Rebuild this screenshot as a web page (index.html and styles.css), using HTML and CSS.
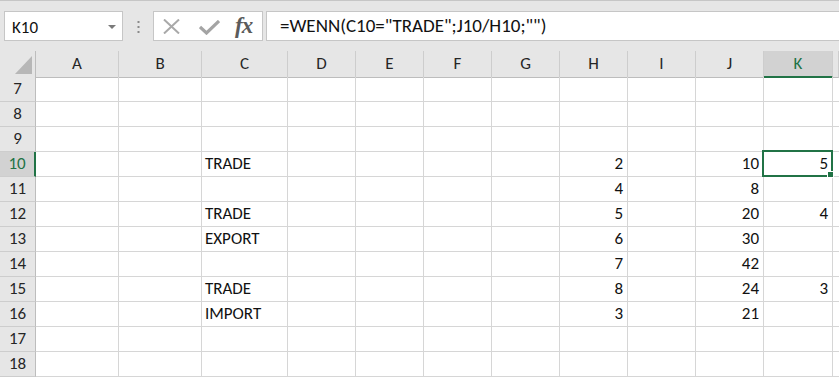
FILE: index.html
```html
<!DOCTYPE html>
<html lang="de">
<head>
    <meta charset="UTF-8">
    <title>Mappe1 - Excel</title>
    <link rel="stylesheet" href="styles.css">
</head>
<body>
    <!-- Formula bar -->
    <div class="toolbar">
        <div class="namebox">
            <span>K10</span>
            <span class="caret"></span>
        </div>
        <div class="grip">
            <svg width="3" height="12" viewBox="0 0 3 12"><rect x="0.5" y="0" width="2" height="2" fill="#8a8a8a"/><rect x="0.5" y="5" width="2" height="2" fill="#8a8a8a"/><rect x="0.5" y="10" width="2" height="2" fill="#8a8a8a"/></svg>
        </div>
        <div class="fxbox">
            <svg class="icon-cancel" width="17" height="15" viewBox="0 0 17 15"><path d="M1 0.5 L16 14.5 M16 0.5 L1 14.5" stroke="#a9a9a9" stroke-width="2" fill="none"/></svg>
            <svg class="icon-enter" width="21" height="15" viewBox="0 0 21 15"><path d="M1 7 L7.5 13 L20 1" stroke="#a4a4a4" stroke-width="3.2" fill="none"/></svg>
            <span class="fx">fx</span>
        </div>
        <div class="formula">=WENN(C10="TRADE";J10/H10;"")</div>
    </div>

    <!-- Sheet -->
    <div class="sheet">
        <div class="row head">
            <div class="hcell corner"><svg width="17" height="18" viewBox="0 0 17 18"><polygon points="17,0 17,18 0,18" fill="#b7b7b7"/></svg></div>
            <div class="hcell">A</div>
            <div class="hcell">B</div>
            <div class="hcell">C</div>
            <div class="hcell">D</div>
            <div class="hcell">E</div>
            <div class="hcell">F</div>
            <div class="hcell">G</div>
            <div class="hcell">H</div>
            <div class="hcell">I</div>
            <div class="hcell">J</div>
            <div class="hcell sel">K</div>
            <div class="hcell"></div>
        </div>

        <div class="row">
            <div class="rhead">7</div>
            <div class="cell"></div><div class="cell"></div><div class="cell"></div><div class="cell"></div><div class="cell"></div><div class="cell"></div><div class="cell"></div><div class="cell"></div><div class="cell"></div><div class="cell"></div><div class="cell"></div><div class="cell"></div>
        </div>
        <div class="row">
            <div class="rhead">8</div>
            <div class="cell"></div><div class="cell"></div><div class="cell"></div><div class="cell"></div><div class="cell"></div><div class="cell"></div><div class="cell"></div><div class="cell"></div><div class="cell"></div><div class="cell"></div><div class="cell"></div><div class="cell"></div>
        </div>
        <div class="row">
            <div class="rhead">9</div>
            <div class="cell"></div><div class="cell"></div><div class="cell"></div><div class="cell"></div><div class="cell"></div><div class="cell"></div><div class="cell"></div><div class="cell"></div><div class="cell"></div><div class="cell"></div><div class="cell"></div><div class="cell"></div>
        </div>
        <div class="row">
            <div class="rhead sel">10</div>
            <div class="cell"></div><div class="cell"></div>
            <div class="cell">TRADE</div>
            <div class="cell"></div><div class="cell"></div><div class="cell"></div><div class="cell"></div>
            <div class="cell num">2</div>
            <div class="cell"></div>
            <div class="cell num">10</div>
            <div class="cell num active">5<span class="selection"><span class="handle"></span></span></div>
            <div class="cell"></div>
        </div>
        <div class="row">
            <div class="rhead">11</div>
            <div class="cell"></div><div class="cell"></div><div class="cell"></div>
            <div class="cell"></div><div class="cell"></div><div class="cell"></div><div class="cell"></div>
            <div class="cell num">4</div>
            <div class="cell"></div>
            <div class="cell num">8</div>
            <div class="cell"></div>
            <div class="cell"></div>
        </div>
        <div class="row">
            <div class="rhead">12</div>
            <div class="cell"></div><div class="cell"></div>
            <div class="cell">TRADE</div>
            <div class="cell"></div><div class="cell"></div><div class="cell"></div><div class="cell"></div>
            <div class="cell num">5</div>
            <div class="cell"></div>
            <div class="cell num">20</div>
            <div class="cell num">4</div>
            <div class="cell"></div>
        </div>
        <div class="row">
            <div class="rhead">13</div>
            <div class="cell"></div><div class="cell"></div>
            <div class="cell">EXPORT</div>
            <div class="cell"></div><div class="cell"></div><div class="cell"></div><div class="cell"></div>
            <div class="cell num">6</div>
            <div class="cell"></div>
            <div class="cell num">30</div>
            <div class="cell"></div>
            <div class="cell"></div>
        </div>
        <div class="row">
            <div class="rhead">14</div>
            <div class="cell"></div><div class="cell"></div><div class="cell"></div>
            <div class="cell"></div><div class="cell"></div><div class="cell"></div><div class="cell"></div>
            <div class="cell num">7</div>
            <div class="cell"></div>
            <div class="cell num">42</div>
            <div class="cell"></div>
            <div class="cell"></div>
        </div>
        <div class="row">
            <div class="rhead">15</div>
            <div class="cell"></div><div class="cell"></div>
            <div class="cell">TRADE</div>
            <div class="cell"></div><div class="cell"></div><div class="cell"></div><div class="cell"></div>
            <div class="cell num">8</div>
            <div class="cell"></div>
            <div class="cell num">24</div>
            <div class="cell num">3</div>
            <div class="cell"></div>
        </div>
        <div class="row">
            <div class="rhead">16</div>
            <div class="cell"></div><div class="cell"></div>
            <div class="cell">IMPORT</div>
            <div class="cell"></div><div class="cell"></div><div class="cell"></div><div class="cell"></div>
            <div class="cell num">3</div>
            <div class="cell"></div>
            <div class="cell num">21</div>
            <div class="cell"></div>
            <div class="cell"></div>
        </div>
        <div class="row">
            <div class="rhead">17</div>
            <div class="cell"></div><div class="cell"></div><div class="cell"></div><div class="cell"></div><div class="cell"></div><div class="cell"></div><div class="cell"></div><div class="cell"></div><div class="cell"></div><div class="cell"></div><div class="cell"></div><div class="cell"></div>
        </div>
        <div class="row">
            <div class="rhead">18</div>
            <div class="cell"></div><div class="cell"></div><div class="cell"></div><div class="cell"></div><div class="cell"></div><div class="cell"></div><div class="cell"></div><div class="cell"></div><div class="cell"></div><div class="cell"></div><div class="cell"></div><div class="cell"></div>
        </div>
    </div>
</body>
</html>
```

FILE: styles.css
```css
/* Reset */
* {
    margin: 0;
    padding: 0;
    box-sizing: border-box;
}

body {
    width: 839px;
    height: 378px;
    overflow: hidden;
    background: #fff;
    font-family: Calibri, Carlito, 'Lato', sans-serif;
    font-size: 17px;
    color: #111;
}

/* Formula bar */
.toolbar {
    display: flex;
    align-items: flex-start;
    height: 51px;
    padding-top: 10px;
    background: #e6e6e6;
    border-top: 1px solid #c6c6c6;
}

.namebox {
    display: flex;
    align-items: center;
    width: 119px;
    height: 30px;
    margin-left: 4px;
    padding: 2px 6px 0 7px;
    background: #fff;
    border: 1px solid #c6c6c6;
}

.caret {
    margin-left: auto;
    border-left: 4px solid transparent;
    border-right: 4px solid transparent;
    border-top: 4px solid #7a7a7a;
}

.grip {
    display: flex;
    justify-content: center;
    width: 30px;
    padding-top: 10px;
}

.fxbox {
    display: flex;
    align-items: center;
    width: 110px;
    height: 30px;
    background: #fff;
    border: 1px solid #c6c6c6;
}

.icon-cancel {
    margin-left: 9px;
    margin-top: 1px;
}

.icon-enter {
    margin-left: 19px;
    margin-top: 2px;
}

.fx {
    margin-left: 15px;
    font-family: 'Liberation Serif', serif;
    font-style: italic;
    font-weight: bold;
    font-size: 23px;
    letter-spacing: -1px;
    color: #5b5b5b;
}

.formula {
    flex: 1;
    height: 30px;
    margin-left: 3px;
    margin-right: -10px;
    padding: 2px 0 0 13px;
    font-size: 19px;
    line-height: 24px;
    background: #fff;
    border: 1px solid #c6c6c6;
    white-space: nowrap;
}

/* Sheet grid */
.row {
    display: grid;
    grid-template-columns: 36px 83px 83px 86px repeat(7, 68px) 69px 1fr;
    height: 25px;
}

.row.head {
    height: 26px;
}

.hcell {
    background: #e6e6e6;
    border-right: 1px solid #cdcdcd;
    border-bottom: 1px solid #bdbdbd;
    text-align: center;
    line-height: 25px;
    color: #262626;
}

.hcell.corner {
    display: flex;
    justify-content: flex-end;
    align-items: flex-end;
    padding: 0 3px 3px 0;
    border-right-color: #bdbdbd;
}

.hcell.sel {
    background: #d2d2d2;
    color: #217346;
    border-bottom: 2px solid #217346;
}

.rhead {
    background: #e6e6e6;
    border-right: 1px solid #bdbdbd;
    border-bottom: 1px solid #cdcdcd;
    text-align: center;
    line-height: 24px;
    color: #262626;
}

.rhead.sel {
    background: #d2d2d2;
    color: #217346;
    border-right: 2px solid #217346;
}

.cell {
    border-right: 1px solid #d6d6d6;
    border-bottom: 1px solid #d6d6d6;
    padding: 0 4px 0 3px;
    line-height: 24px;
    white-space: nowrap;
}

.cell.num {
    text-align: right;
}

/* Active cell */
.cell.active {
    position: relative;
}

.selection {
    position: absolute;
    top: -2px;
    left: -2px;
    right: -1px;
    bottom: -1px;
    border: 2px solid #217346;
}

.handle {
    position: absolute;
    right: -3px;
    bottom: -3px;
    width: 7px;
    height: 7px;
    background: #217346;
    border: 1px solid #fff;
}
```
